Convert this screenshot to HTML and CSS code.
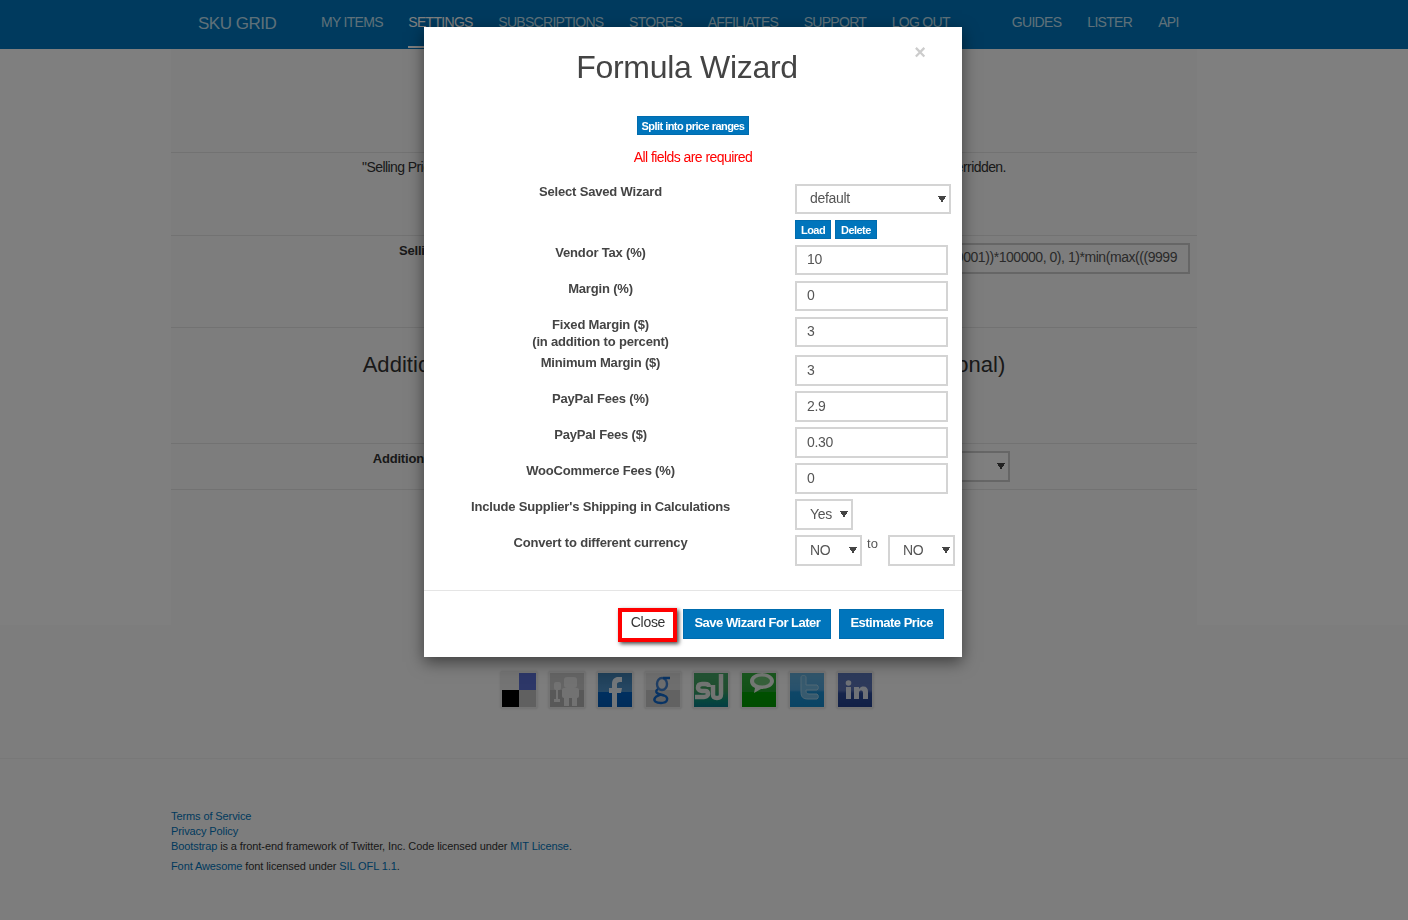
FILE: index.html
```html
<!DOCTYPE html>
<html lang="en">

<head>
    <meta charset="UTF-8">
    <meta name="viewport" content="width=device-width, initial-scale=1.0">
    <title>Formula Wizard</title>
    <link rel="stylesheet" href="styles.css">
</head>

<body>

    <!-- Top navigation -->
    <nav class="navbar">
        <a class="brand" href="#">SKU GRID</a>
        <ul class="nav-main">
            <li><a href="#">MY ITEMS</a></li>
            <li class="active"><a href="#">SETTINGS</a></li>
            <li><a href="#">SUBSCRIPTIONS</a></li>
            <li><a href="#">STORES</a></li>
            <li><a href="#">AFFILIATES</a></li>
            <li><a href="#">SUPPORT</a></li>
            <li><a href="#">LOG OUT</a></li>
        </ul>
        <ul class="nav-side">
            <li><a href="#">GUIDES</a></li>
            <li><a href="#">LISTER</a></li>
            <li><a href="#">API</a></li>
        </ul>
    </nav>

    <!-- Settings page behind the modal -->
    <main class="container">
        <section class="panel panel-top"></section>
        <section class="panel panel-note">
            <p>"Selling Price" is worked out from the formula below for every item, unless a fixed price is set, when it is overridden.</p>
        </section>
        <section class="panel panel-formula">
            <label class="panel-label">Selling Price Formula</label>
            <div class="formula-box"><span>round(max(min(1, ceil((x-0.00001))*100000, 0), 1)*min(max(((9999</span></div>
        </section>
        <section class="panel panel-heading">
            <h2>Additional Shipping and Handling Cost Formula Wizard (Optional)</h2>
        </section>
        <section class="panel panel-select">
            <label class="panel-label">Additional Price Formula Type</label>
            <select class="panel-field">
                <option>&nbsp;</option>
            </select>
        </section>
    </main>

    <footer class="site-footer">
        <div class="social">
            <a class="social-tile" href="#"><svg viewBox="0 0 34 34"><rect width="17" height="17" fill="#e8e8e8"/><rect x="17" width="17" height="17" fill="#5a6fd0"/><rect y="17" width="17" height="17" fill="#000"/><rect x="17" y="17" width="17" height="17" fill="#c0c0c0"/></svg></a>
            <a class="social-tile" href="#"><svg viewBox="0 0 34 34"><rect width="34" height="34" fill="#c8c8c8"/><rect y="17" width="34" height="17" fill="#b0b0b0"/><rect x="14" y="4" width="13" height="11" rx="3" fill="#e4e4e4"/><rect x="12" y="15" width="17" height="10" rx="2" fill="#e4e4e4"/><rect x="14" y="25" width="5" height="8" fill="#e4e4e4"/><rect x="22" y="25" width="5" height="8" fill="#e4e4e4"/><rect x="4" y="9" width="7" height="8" rx="2" fill="#e4e4e4"/><rect x="6" y="17" width="2" height="9" fill="#e4e4e4"/><rect x="4" y="26" width="6" height="3" fill="#e4e4e4"/></svg></a>
            <a class="social-tile" href="#"><svg viewBox="0 0 34 34"><defs><linearGradient id="fbBg" x1="0" y1="0" x2="0" y2="1"><stop offset="0" stop-color="#3f7fb0"/><stop offset=".55" stop-color="#4d90c8"/><stop offset=".56" stop-color="#0060c0"/><stop offset="1" stop-color="#0058b4"/></linearGradient></defs><rect width="34" height="34" fill="url(#fbBg)"/><path d="M14 34V20h-3v-5h3v-4c0-5 3-7 6-7h4v5h-2c-2 0-3 1-3 2v4h5l-1 5h-4v14z" fill="#e6eef5"/></svg></a>
            <a class="social-tile" href="#"><svg viewBox="0 0 34 34"><rect width="34" height="34" fill="#dcdcdc"/><rect y="17" width="34" height="17" fill="#c4c4c4"/><ellipse cx="16" cy="11" rx="5" ry="6" fill="none" stroke="#3f7cc8" stroke-width="2.400"/><path d="M17 5h7M12 16c-3 2-2 4 1 5l5 1.500c5 2 4 7.500-3 7.500-5 0-8-2-6-5 1-2 3-2 5-3" fill="none" stroke="#1067c8" stroke-width="2.400"/></svg></a>
            <a class="social-tile" href="#"><svg viewBox="0 0 34 34"><defs><linearGradient id="suBg" x1="0" y1="0" x2="0" y2="1"><stop offset="0" stop-color="#46a868"/><stop offset=".5" stop-color="#3f9a5c"/><stop offset=".8" stop-color="#0f8e7a"/><stop offset="1" stop-color="#0a7a88"/></linearGradient></defs><rect width="34" height="34" fill="url(#suBg)"/><path d="M15 14c0-2-1-3-4-3H8c-3 0-4 2-4 4s2 3 4 3h3c2 0 3 1 3 3s-2 3-4 3H1" fill="none" stroke="#e4e8e4" stroke-width="4.500"/><path d="M19 12v9c0 3 1 4 4 4s4-1 4-4V1" fill="none" stroke="#e4e8e4" stroke-width="4.500"/></svg></a>
            <a class="social-tile" href="#"><svg viewBox="0 0 34 34"><defs><linearGradient id="teBg" x1="0" y1="0" x2="0" y2="1"><stop offset="0" stop-color="#35b040"/><stop offset=".55" stop-color="#22a02c"/><stop offset=".56" stop-color="#00a000"/><stop offset="1" stop-color="#009800"/></linearGradient></defs><rect width="34" height="34" fill="url(#teBg)"/><path d="M20 0c-6 0-12 3-12 8 0 4 3 6 5 7l-1 5 7-4c7 0 13-3 13-8 0-4-5-8-12-8z" fill="#e8f0e8"/><ellipse cx="20" cy="8" rx="8" ry="4.500" fill="#6cc074"/></svg></a>
            <a class="social-tile" href="#"><svg viewBox="0 0 34 34"><defs><linearGradient id="twBg" x1="0" y1="0" x2="0" y2="1"><stop offset="0" stop-color="#65aed8"/><stop offset=".5" stop-color="#4ea2d8"/><stop offset=".56" stop-color="#1c8ed0"/><stop offset="1" stop-color="#1488c8"/></linearGradient></defs><rect width="34" height="34" fill="url(#twBg)"/><path d="M11 4v15c0 5 2 7 7 7h9a3 3 0 0 0 0-5h-8c-2 0-3-1-3-3v-1h11a3 3 0 0 0 0-5H16V4c0-2-5-2-5 0z" fill="#6eb4dc" stroke="#a0cfe8" stroke-width="1"/></svg></a>
            <a class="social-tile" href="#"><svg viewBox="0 0 34 34"><defs><linearGradient id="inBg" x1="0" y1="0" x2="0" y2="1"><stop offset="0" stop-color="#5a76b8"/><stop offset=".5" stop-color="#5a72b4"/><stop offset=".6" stop-color="#2c4a98"/><stop offset="1" stop-color="#23408c"/></linearGradient></defs><rect width="34" height="34" fill="url(#inBg)"/><rect x="8" y="14" width="5" height="12" fill="#dfe4ee"/><circle cx="10.500" cy="10" r="2.800" fill="#dfe4ee"/><path d="M16 26V14h5v2c1-2 3-2.500 4.500-2.500 3 0 4.500 2 4.500 5V26h-5v-6c0-2-1-2.500-2-2.500s-2 .5-2 2.500v6z" fill="#dfe4ee"/></svg></a>
        </div>
        <hr class="footer-rule">
        <div class="footer-text">
            <p><a href="#">Terms of Service</a></p>
            <p><a href="#">Privacy Policy</a></p>
            <p><a href="#">Bootstrap</a> is a front-end framework of Twitter, Inc. Code licensed under <a href="#">MIT License</a>.</p>
            <p class="footer-last"><a href="#">Font Awesome</a> font licensed under <a href="#">SIL OFL 1.1</a>.</p>
        </div>
    </footer>

    <div class="backdrop"></div>

    <!-- Formula Wizard modal -->
    <div class="modal">
        <button class="modal-close">&times;</button>
        <h1 class="modal-title">Formula Wizard</h1>
        <div class="modal-split">
            <button class="btn btn-small">Split into price ranges</button>
        </div>
        <p class="modal-required">All fields are required</p>

        <form class="wizard">
            <div class="wizard-row">
                <label>Select Saved Wizard</label>
                <div>
                    <select class="field-saved">
                        <option>default</option>
                    </select>
                    <div class="saved-actions">
                        <button type="button" class="btn btn-small">Load</button>
                        <button type="button" class="btn btn-small">Delete</button>
                    </div>
                </div>
            </div>
            <div class="wizard-row">
                <label>Vendor Tax (%)</label>
                <input class="field-short" type="text" value="10">
            </div>
            <div class="wizard-row">
                <label>Margin (%)</label>
                <input class="field-short" type="text" value="0">
            </div>
            <div class="wizard-row">
                <label>Fixed Margin ($)<br>(in addition to percent)</label>
                <input class="field-short" type="text" value="3">
            </div>
            <div class="wizard-row">
                <label>Minimum Margin ($)</label>
                <input type="text" value="3">
            </div>
            <div class="wizard-row">
                <label>PayPal Fees (%)</label>
                <input type="text" value="2.9">
            </div>
            <div class="wizard-row">
                <label>PayPal Fees ($)</label>
                <input type="text" value="0.30">
            </div>
            <div class="wizard-row">
                <label>WooCommerce Fees (%)</label>
                <input type="text" value="0">
            </div>
            <div class="wizard-row">
                <label>Include Supplier's Shipping in Calculations</label>
                <select class="field-yes">
                    <option>Yes</option>
                </select>
            </div>
            <div class="wizard-row">
                <label>Convert to different currency</label>
                <div class="currency">
                    <select class="field-currency">
                        <option>NO</option>
                    </select>
                    <span class="currency-to">to</span>
                    <select class="field-currency">
                        <option>NO</option>
                    </select>
                </div>
            </div>
        </form>

        <div class="modal-footer">
            <button class="btn-close">Close</button>
            <button class="btn btn-large">Save Wizard For Later</button>
            <button class="btn btn-large">Estimate Price</button>
        </div>
    </div>

</body>

</html>
```

FILE: styles.css
```css
:root {
    --primary: #0075bc;
    --text-color: #333;
    --line: #d4d4d4;
}

* {
    box-sizing: border-box;
}

body {
    font-family: "Liberation Sans", Arial, sans-serif;
    font-size: 14px;
    color: var(--text-color);
    background: #fff;
    margin: 0;
    height: 920px;
    overflow: hidden;
}

a {
    color: var(--primary);
    text-decoration: none;
}

/* Navbar */
.navbar {
    display: flex;
    align-items: flex-start;
    height: 49px;
    background: var(--primary);
    padding-left: 198px;
}

.navbar ul {
    display: flex;
    list-style: none;
    margin: 0;
    padding: 0;
}

.navbar a {
    display: block;
    color: #bfe0f2;
    height: 48px;
    padding-top: 14px;
    line-height: 17px;
}

.navbar .brand {
    width: 123px;
    font-size: 17px;
    letter-spacing: -0.5px;
    line-height: 20px;
}

.nav-main {
    gap: 25.5px;
}

.navbar .nav-side {
    gap: 26px;
    margin-left: 62px;
}

.nav-main li a,
.nav-side li a {
    letter-spacing: -0.7px;
}

.navbar .active a {
    color: #fff;
    border-bottom: 2px solid #fff;
}

/* Settings page */
.container {
    width: 1026px;
    height: 576px;
    margin-left: 171px;
    background: #fafafa;
}

.panel {
    border-bottom: 1px solid #e4e4e4;
}

.panel-top {
    height: 104px;
}

.panel-note {
    height: 83px;
    padding-top: 6px;
    text-align: center;
}

.panel-note p {
    margin: 0;
    line-height: 17px;
    letter-spacing: -0.58px;
}

.panel-formula {
    display: flex;
    height: 92px;
    padding-top: 7px;
}

.panel-label {
    width: 585px;
    margin-top: -1px;
    text-align: center;
    font-size: 13px;
    font-weight: bold;
    letter-spacing: -0.18px;
    line-height: 17px;
}

.formula-box {
    display: flex;
    justify-content: flex-end;
    width: 434px;
    height: 31px;
    padding: 0 11px;
    border: 2px solid #ccc;
    color: #555;
    line-height: 25px;
    letter-spacing: -0.45px;
    white-space: nowrap;
    overflow: hidden;
}

.panel-heading {
    height: 116px;
    padding-top: 23px;
    text-align: center;
}

.panel-heading h2 {
    margin: 0;
    font-size: 22px;
    font-weight: normal;
    letter-spacing: 0.05px;
    line-height: 27px;
    white-space: nowrap;
}

.panel-select {
    display: flex;
    height: 46px;
    padding-top: 7px;
}

.panel-field {
    width: 254px;
    height: 31px;
    border: 2px solid #ccc;
    background-color: #fff;
}

/* Selects get the small filled triangle */
select {
    appearance: none;
    background-image: linear-gradient(to top right, transparent 50%, #444 50%), linear-gradient(to top left, transparent 50%, #444 50%);
    background-size: 4px 7px;
    background-repeat: no-repeat;
    background-position: right 7px center, right 3px center;
}

/* Footer band */
.site-footer {
    height: 295px;
    background: #fafafa;
}

.social {
    display: flex;
    justify-content: center;
    gap: 10px;
    padding: 46px 34px 0 0;
}

.social-tile {
    display: block;
    width: 38px;
    height: 38px;
    padding: 2px;
    border-radius: 3px;
    background: #e8e8e8;
    box-shadow: 0 0 2px #ddd;
}

.social-tile svg {
    display: block;
    width: 34px;
    height: 34px;
    filter: blur(0.4px);
}

.footer-rule {
    margin: 49px 0 0;
    border: 0;
    border-top: 1px solid #f0f0f0;
}

.footer-text {
    width: 1026px;
    margin: 50px 0 0 171px;
    font-size: 11px;
    letter-spacing: -0.1px;
    line-height: 15px;
}

.footer-text p {
    margin: 0;
}

.footer-text .footer-last {
    margin-top: 5px;
}

/* Modal */
.backdrop {
    position: fixed;
    inset: 0;
    background: rgba(0, 0, 0, 0.5);
}

.modal {
    position: absolute;
    top: 27px;
    left: 424px;
    width: 538px;
    height: 630px;
    background: #fff;
    box-shadow: 0 5px 15px rgba(0, 0, 0, 0.5);
}

.modal-close {
    position: absolute;
    top: 14px;
    right: 36px;
    padding: 0;
    border: 0;
    background: none;
    color: #ccc;
    font-family: inherit;
    font-size: 20px;
    font-weight: bold;
    line-height: 22px;
}

.modal-title {
    margin: 0;
    padding: 20px 12px 0 0;
    text-align: center;
    font-size: 32px;
    font-weight: normal;
    letter-spacing: -0.3px;
    line-height: 40px;
    color: #444;
}

.btn {
    border: 1px solid #006cae;
    border-radius: 0;
    background: var(--primary);
    color: #fff;
    font-family: inherit;
    font-weight: bold;
}

.btn-small {
    height: 19px;
    padding: 0 4px;
    font-size: 11px;
    line-height: 16px;
    letter-spacing: -0.55px;
}

.btn-large {
    height: 30px;
    padding: 0 10px 3px;
    font-size: 13px;
    letter-spacing: -0.5px;
}

.modal-split {
    display: flex;
    justify-content: center;
    margin-top: 29px;
}

.modal-required {
    margin: 14px 0 0;
    text-align: center;
    color: #f00;
    line-height: 17px;
    letter-spacing: -0.56px;
}

/* Wizard form */
.wizard {
    margin-top: 18px;
    padding-left: 15px;
}

.wizard-row {
    display: grid;
    grid-template-columns: 323px auto;
    column-gap: 33px;
    justify-content: start;
    min-height: 31px;
    margin-bottom: 5px;
}

.wizard-row label {
    margin-top: -1px;
    text-align: center;
    font-size: 13px;
    font-weight: bold;
    letter-spacing: -0.18px;
    line-height: 17px;
    color: #444;
}

.wizard input,
.wizard select {
    height: 31px;
    border: 2px solid var(--line);
    border-radius: 0;
    background-color: #fff;
    color: #555;
    font-family: inherit;
    font-size: 14px;
    letter-spacing: -0.3px;
}

.wizard input {
    display: block;
    width: 153px;
    padding: 0 10px 2px;
}

.wizard .field-short {
    height: 30px;
}

.wizard select {
    display: block;
    padding: 0 0 2px 13px;
}

.wizard .field-saved {
    width: 156px;
    height: 30px;
}

.saved-actions {
    display: flex;
    gap: 4px;
    margin: 6px 0 1px;
}

.saved-actions .btn {
    padding: 0 5px;
}

.field-yes {
    width: 58px;
}

.field-currency {
    width: 67px;
}

.currency {
    display: flex;
}

.currency-to {
    width: 26px;
    padding-right: 5px;
    text-align: center;
    line-height: 17px;
    color: #555;
    font-size: 13px;
}

.modal-footer {
    position: absolute;
    left: 0;
    right: 0;
    bottom: 0;
    height: 67px;
    display: flex;
    align-items: flex-start;
    justify-content: flex-end;
    gap: 8px;
    padding: 18px 18px 0 0;
    border-top: 1px solid #e5e5e5;
}

.btn-close {
    width: 59px;
    height: 34px;
    margin: -1px -2px 0 0;
    padding: 0 0 6px;
    border: 4px solid #f00;
    background: #fff;
    color: #333;
    font-family: inherit;
    font-size: 14px;
    letter-spacing: -0.3px;
    box-shadow: 2px 2px 4px rgba(0, 0, 0, 0.7);
}
```
